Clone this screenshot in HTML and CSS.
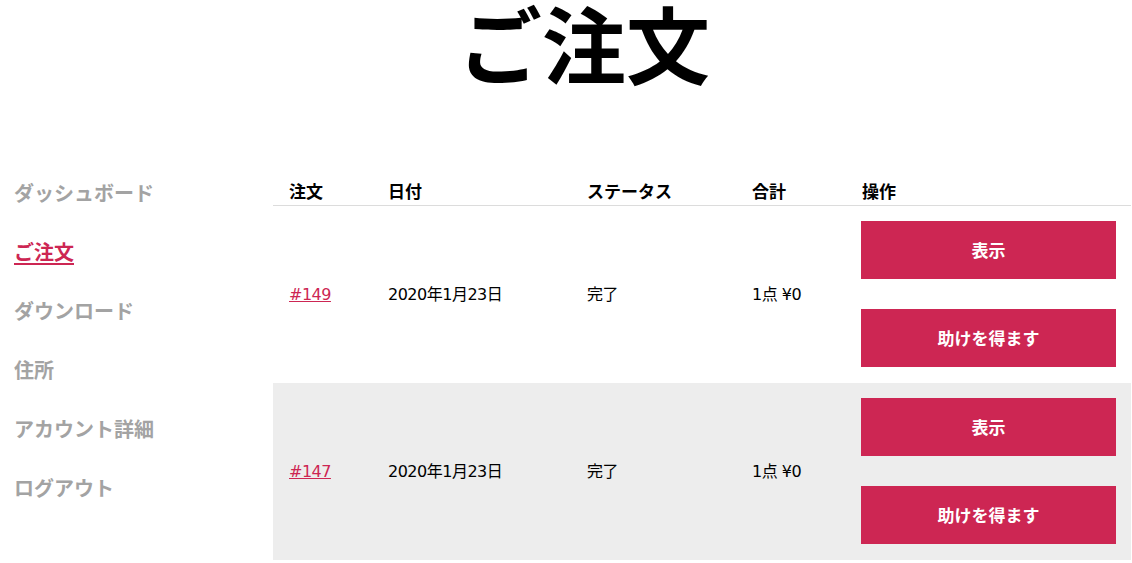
FILE: index.html
```html
<!DOCTYPE html>
<html lang="ja">
<head>
<meta charset="utf-8">
<title>ご注文</title>
<link rel="stylesheet" href="styles.css">
</head>
<body>
<h1 class="page-title">ご注文</h1>
<div class="account">
  <nav class="account-nav">
    <ul>
      <li><a href="#">ダッシュボード</a></li>
      <li class="is-active"><a href="#">ご注文</a></li>
      <li><a href="#">ダウンロード</a></li>
      <li><a href="#">住所</a></li>
      <li><a href="#">アカウント詳細</a></li>
      <li><a href="#">ログアウト</a></li>
    </ul>
  </nav>
  <div class="account-content">
    <table class="orders">
      <colgroup>
        <col class="c-num"><col class="c-date"><col class="c-status"><col class="c-total"><col class="c-actions">
      </colgroup>
      <thead>
        <tr><th>注文</th><th>日付</th><th>ステータス</th><th>合計</th><th class="th-actions">操作</th></tr>
      </thead>
      <tbody>
        <tr>
          <td><a class="order-link" href="#">#149</a></td>
          <td>2020年1月23日</td>
          <td>完了</td>
          <td>1点 ¥0</td>
          <td class="actions"><a class="button" href="#">表示</a><a class="button" href="#">助けを得ます</a></td>
        </tr>
        <tr class="alt">
          <td><a class="order-link" href="#">#147</a></td>
          <td>2020年1月23日</td>
          <td>完了</td>
          <td>1点 ¥0</td>
          <td class="actions"><a class="button" href="#">表示</a><a class="button" href="#">助けを得ます</a></td>
        </tr>
      </tbody>
    </table>
  </div>
</div>
</body>
</html>
```

FILE: styles.css
```css
html, body {
  margin: 0;
  padding: 0;
  background: #fff;
}
body {
  font-family: "DejaVu Sans", "Noto Sans CJK JP", sans-serif;
  color: #000;
  width: 1132px;
}
.page-title {
  margin: 0;
  font-family: "Noto Sans CJK JP", sans-serif;
  font-weight: 700;
  font-size: 84px;
  line-height: 84px;
  text-align: center;
  padding-left: 36px;
}
.account {
  display: flex;
  align-items: flex-start;
  padding-top: 79px;
}
.account-nav {
  width: 273px;
  flex: none;
}
.account-nav ul {
  list-style: none;
  margin: 0;
  padding: 0 0 0 14px;
}
.account-nav li {
  font-family: "Noto Sans CJK JP", sans-serif;
  font-weight: 700;
  font-size: 20px;
  line-height: 59px;
}
.account-nav a {
  color: #a3a3a3;
  text-decoration: none;
}
.account-nav .is-active a {
  color: #cd2653;
  text-decoration: underline;
  text-underline-offset: 3px;
  text-decoration-thickness: 2px;
}
.account-content {
  width: 858px;
  flex: none;
  margin-top: 14px;
}
.orders {
  width: 858px;
  border-collapse: collapse;
  table-layout: fixed;
}
.c-num { width: 99px; }
.c-date { width: 199px; }
.c-status { width: 165px; }
.c-total { width: 110px; }
.c-actions { width: 285px; }
.orders th {
  font-family: "Noto Sans CJK JP", sans-serif;
  font-weight: 700;
  font-size: 17px;
  line-height: 20px;
  text-align: left;
  padding: 4px 16px;
  border-bottom: 1px solid #dcdcdc;
}
.orders td {
  font-size: 16px;
  line-height: 20px;
  letter-spacing: -0.5px;
  padding: 0 16px;
  vertical-align: middle;
  height: 177px;
  box-sizing: border-box;
}
.orders tr.alt td {
  background: #ededed;
}
.order-link {
  color: #cd2653;
  text-decoration: underline;
}
.orders td.actions {
  padding: 15px 15px 16px 15px;
  letter-spacing: 0;
}
.button {
  display: flex;
  align-items: center;
  justify-content: center;
  width: 255px;
  height: 58px;
  background: #cd2653;
  color: #fff;
  font-family: "Noto Sans CJK JP", sans-serif;
  font-weight: 700;
  font-size: 17px;
  text-decoration: none;
}
.button + .button {
  margin-top: 30px;
}
```
